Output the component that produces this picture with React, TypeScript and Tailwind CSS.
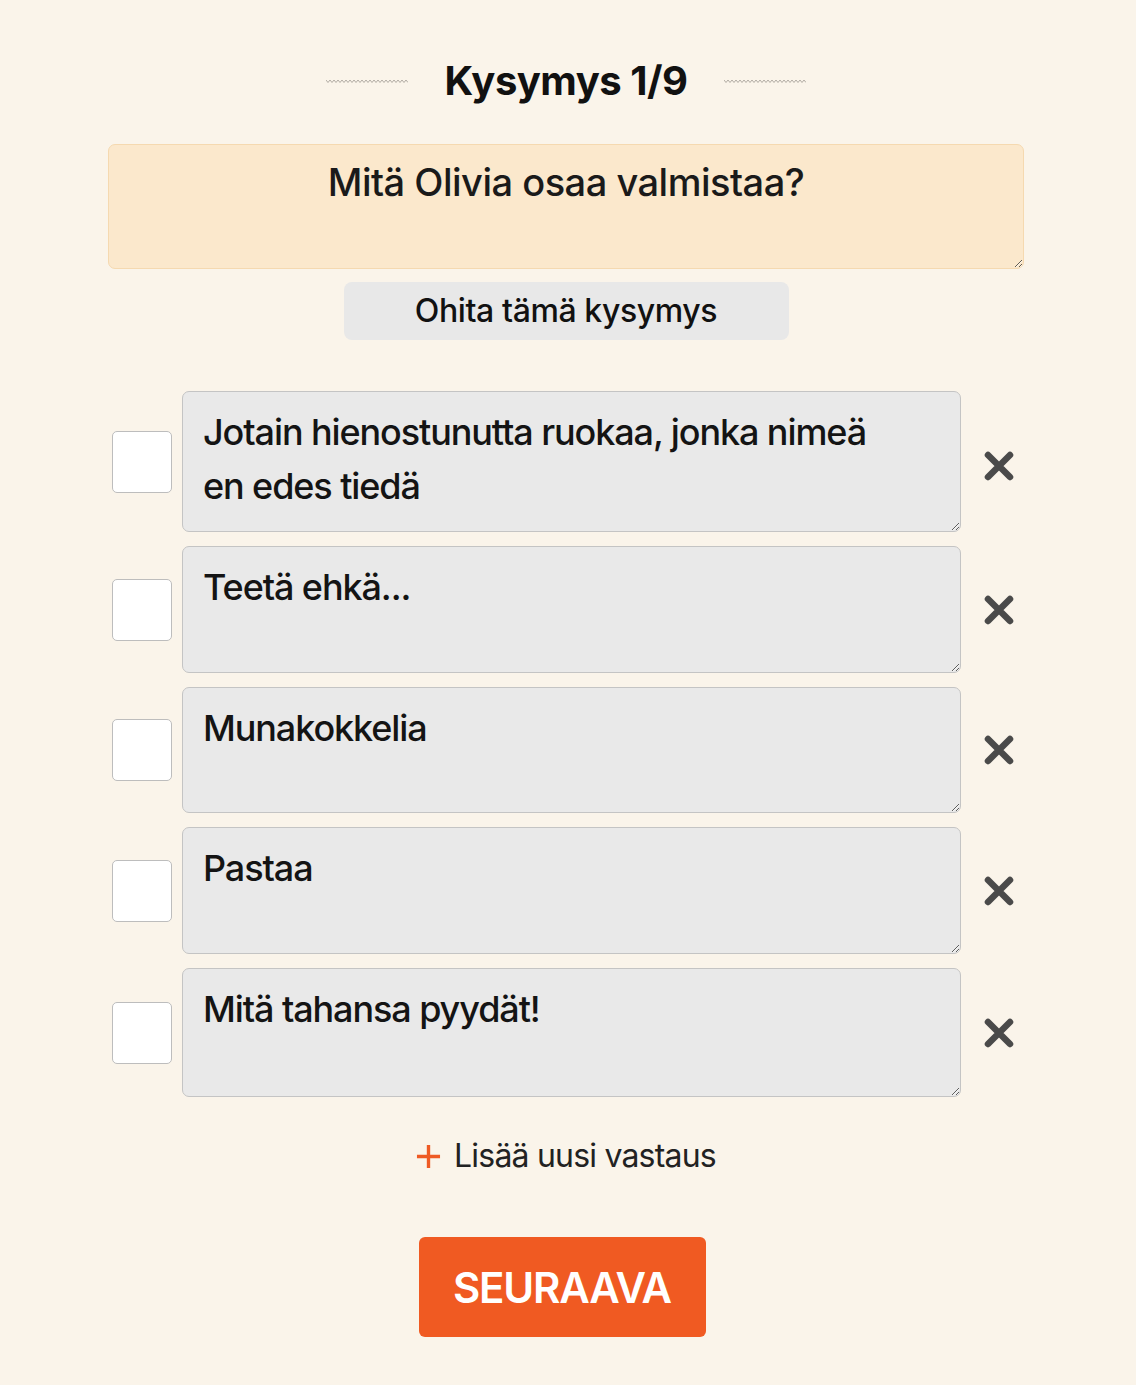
import { useState } from "react";

const answers = [
  { text: "Jotain hienostunutta ruokaa, jonka nimeä en edes tiedä", h: "h-[141px]", x: "mt-[8px]" },
  { text: "Teetä ehkä...", h: "h-[127px]", x: "mt-0" },
  { text: "Munakokkelia", h: "h-[126px]", x: "mt-0" },
  { text: "Pastaa", h: "h-[127px]", x: "mt-0" },
  { text: "Mitä tahansa pyydät!", h: "h-[129px]", x: "mt-0" },
];

function Squiggle() {
  const pts: string[] = [];
  for (let i = 0; i <= 41; i++) pts.push(`${i * 2},${i % 2 === 0 ? 1 : 3.5}`);
  return (
    <svg width="82" height="5" viewBox="0 0 82 5" className="text-[#a9a49c]">
      <polyline points={pts.join(" ")} fill="none" stroke="currentColor" strokeWidth="0.9" />
    </svg>
  );
}

function Cross() {
  return (
    <svg width="32" height="32" viewBox="0 0 32 32" className="text-[#4a4a4a]">
      <path d="M5 5 L27 27 M27 5 L5 27" stroke="currentColor" strokeWidth="6.5" strokeLinecap="round" />
    </svg>
  );
}

export default function App() {
  const [checked, setChecked] = useState<boolean[]>(answers.map(() => false));

  return (
    <div className="min-h-[1385px] bg-[#faf4ea] font-['Inter',sans-serif] text-[#111] overflow-hidden">
      <div className="ml-[108px] w-[916px] pt-[57px] flex flex-col items-center">
        {/* header */}
        <div className="flex items-center gap-[37px]">
          <Squiggle />
          <h1 className="text-[40px] font-bold leading-[48px] tracking-[-0.5px]">Kysymys 1/9</h1>
          <Squiggle />
        </div>

        {/* question */}
        <textarea
          defaultValue="Mitä Olivia osaa valmistaa?"
          className="mt-[39px] w-full h-[125px] bg-[#fbe8cc] border border-[#f5d9b0] rounded-[7px] text-center text-[38px] font-medium tracking-[-0.5px] leading-[48px] pt-[13px] px-4 text-[#1a1a1a] outline-none"
        />

        <button className="mt-[13px] w-[445px] h-[58px] bg-[#e8e8e8] rounded-[8px] text-[32px] font-medium tracking-[-0.4px] text-[#111]">
          Ohita tämä kysymys
        </button>

        {/* answers */}
        <div className="mt-[51px] w-full flex flex-col gap-[14px]">
          {answers.map((a, i) => (
            <div key={i} className="flex items-center">
              <button
                onClick={() => setChecked(checked.map((c, j) => (j === i ? !c : c)))}
                className="ml-[4px] w-[60px] h-[62px] bg-white border border-[#bdbdbd] rounded-[5px] shrink-0"
              >
                {checked[i] ? "✓" : ""}
              </button>
              <textarea
                defaultValue={a.text}
                className={`ml-[10px] w-[779px] ${a.h} bg-[#e9e9e9] border-[1.5px] border-[#c4c4c4] rounded-[7px] text-[36px] font-medium tracking-[-1.1px] leading-[54px] pt-[13px] pl-[20px] pr-[50px] text-[#141414] outline-none shrink-0`}
              />
              <button className={`ml-[22px] ${a.x}`}>
                <Cross />
              </button>
            </div>
          ))}
        </div>

        {/* add */}
        <button className="mt-[35px] flex items-center gap-[13px] text-[32px] tracking-[-0.8px] text-[#222]">
          <svg width="25" height="25" viewBox="0 0 26 26" className="text-[#ee5a24]">
            <path d="M13 1 V25 M1 13 H25" stroke="currentColor" strokeWidth="3.5" />
          </svg>
          Lisää uusi vastaus
        </button>

        <button className="mt-[57px] mr-[8px] w-[287px] h-[100px] bg-[#f05a22] rounded-[6px] text-white text-[42px] font-semibold tracking-[-1.2px]">
          SEURAAVA
        </button>
      </div>
    </div>
  );
}
